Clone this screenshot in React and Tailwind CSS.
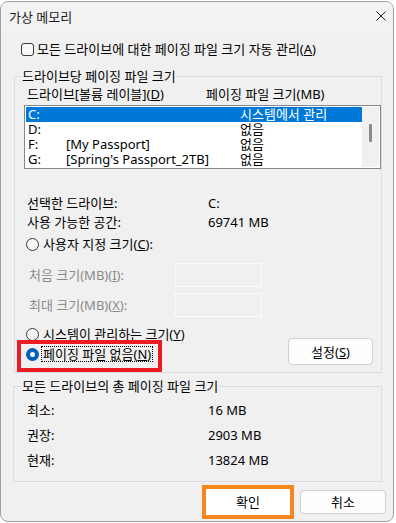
const Radio = ({ checked }) =>
  checked ? (
    <span className="w-[13px] h-[13px] rounded-full bg-[#005fb8] flex items-center justify-center shrink-0">
      <span className="w-[5px] h-[5px] rounded-full bg-white" />
    </span>
  ) : (
    <span className="w-[13px] h-[13px] rounded-full border border-[#3a3a3a] bg-[#f7f7f7] shrink-0" />
  );

export default function App() {
  const rows = [
    { d: "C:", l: "", s: "시스템에서 관리", sel: true },
    { d: "D:", l: "", s: "없음" },
    { d: "F:", l: "[My Passport]", s: "없음" },
    { d: "G:", l: "[Spring's Passport_2TB]", s: "없음" },
  ];
  return (
    <div className="w-[396px] h-[523px] bg-white pt-[1px] font-['Noto_Sans','Noto_Sans_CJK_KR',sans-serif] text-[13px] leading-[16px] text-black">
      <div className="w-[394px] h-[521px] border border-[#a0a0a0] rounded-[8px] bg-[#f0f0f0] overflow-hidden flex flex-col">
        {/* title bar */}
        <div className="h-[29px] shrink-0 flex items-center justify-between pl-[8px] pr-[7px] bg-[#f2f2f2]">
          <span className="text-[#1a1a1a]">가상 메모리</span>
          <svg width="10" height="10" viewBox="0 0 10 10" className="mb-[2px]">
            <path d="M0.5 0.5 L9.5 9.5 M9.5 0.5 L0.5 9.5" stroke="#1a1a1a" strokeWidth="1" />
          </svg>
        </div>

        {/* checkbox */}
        <div className="mt-[8px] h-[20px] flex items-center pl-[20px]">
          <span className="w-[13px] h-[13px] rounded-[3px] border border-[#3a3a3a] bg-[#f7f7f7] shrink-0" />
          <span className="ml-[3px] whitespace-nowrap">
            모든 드라이브에 대한 페이징 파일 크기 자동 관리(<u>A</u>)
          </span>
        </div>

        {/* group 1 */}
        <div className="relative mt-[17px] ml-[13px] w-[368px] h-[297px] border border-[#dcdcdc] shrink-0">
          <span className="absolute left-[6px] -top-[9px] px-[1px] bg-[#f0f0f0] whitespace-nowrap">
            드라이브당 페이징 파일 크기
          </span>

          <div className="mt-[9px] h-[16px] flex pl-[12px] whitespace-nowrap">
            <span className="w-[179px]">
              드라이브[볼륨 레이블](<u>D</u>)
            </span>
            <span>페이징 파일 크기(MB)</span>
          </div>

          <div className="mt-[3px] ml-[9px] w-[357px] h-[64px] border border-[#828790] bg-white p-[1px] flex">
            <div className="flex-1 flex flex-col">
              {rows.map((r) => (
                <div
                  key={r.d}
                  className={
                    "h-[15px] leading-[15px] flex items-center pl-[2px] whitespace-nowrap " +
                    (r.sel ? "bg-[#0078d7] text-white" : "")
                  }
                >
                  <span className="w-[38px]">{r.d}</span>
                  <span className="w-[174px]">{r.l}</span>
                  <span>{r.s}</span>
                </div>
              ))}
            </div>
            <div className="w-[17px] bg-[#f0f0f0] flex flex-col items-center">
              <span className="mt-[17px] w-[3px] h-[18px] bg-[#8a8a8a] rounded-[1px]" />
            </div>
          </div>

          <div className="mt-[24px] h-[19px] flex items-center pl-[12px]">
            <span className="w-[181px]">선택한 드라이브:</span>
            <span>C:</span>
          </div>
          <div className="h-[19px] flex items-center pl-[12px]">
            <span className="w-[181px]">사용 가능한 공간:</span>
            <span>69741 MB</span>
          </div>

          <div className="mt-[4px] h-[18px] flex items-center pl-[11px]">
            <Radio />
            <span className="ml-[4px]">
              사용자 지정 크기(<u>C</u>):
            </span>
          </div>

          <div className="mt-[10px] h-[24px] flex items-center pl-[14px] text-[#8a8a8a]">
            <span className="w-[146px]">
              처음 크기(MB)(<u>I</u>):
            </span>
            <span className="w-[87px] h-[24px] border border-[#fbfbfb] bg-[#f0f0f0]" />
          </div>
          <div className="mt-[6px] h-[24px] flex items-center pl-[14px] text-[#8a8a8a]">
            <span className="w-[146px]">
              최대 크기(MB)(<u>X</u>):
            </span>
            <span className="w-[87px] h-[24px] border border-[#fbfbfb] bg-[#f0f0f0]" />
          </div>

          <div className="mt-[8px] flex">
            <div className="flex flex-col pl-[11px]">
              <div className="h-[18px] flex items-center">
                <Radio />
                <span className="ml-[4px] whitespace-nowrap">
                  시스템이 관리하는 크기(<u>Y</u>)
                </span>
              </div>
              <div className="mt-[2px] h-[18px] flex items-center">
                <Radio checked />
                <span className="ml-[2px] px-[1px] border border-dotted border-black leading-[14px] whitespace-nowrap">
                  페이징 파일 없음(<u>N</u>)
                </span>
              </div>
            </div>
            <button className="ml-auto mr-[8px] mt-[13px] w-[85px] h-[27px] bg-[#fdfdfd] border border-[#d0d0d0] rounded-[4px] flex items-center justify-center">
              설정(<u>S</u>)
            </button>
          </div>

          <div className="absolute left-[2px] top-[263px] w-[145px] h-[32px] border-4 border-[#ec1c24]" />
        </div>

        {/* group 2 */}
        <div className="relative mt-[13px] ml-[12px] w-[369px] h-[96px] border border-[#dcdcdc] shrink-0">
          <span className="absolute left-[7px] -top-[9px] px-[1px] bg-[#f0f0f0] whitespace-nowrap">
            모든 드라이브의 총 페이징 파일 크기
          </span>
          <div className="mt-[10px]">
            {[
              ["최소:", "16 MB"],
              ["권장:", "2903 MB"],
              ["현재:", "13824 MB"],
            ].map(([a, b]) => (
              <div key={a} className="h-[25px] flex items-center pl-[13px]">
                <span className="w-[181px]">{a}</span>
                <span>{b}</span>
              </div>
            ))}
          </div>
        </div>

        {/* buttons */}
        <div className="mt-[3px] flex justify-end items-start pr-[7px]">
          <div className="w-[92px] h-[34px] border-4 border-[#f7861f] mr-[6px]">
            <button className="w-full h-full bg-white flex items-center justify-center">확인</button>
          </div>
          <button className="mt-[5px] w-[86px] h-[24px] bg-[#fdfdfd] border border-[#d0d0d0] rounded-[4px] flex items-center justify-center">
            취소
          </button>
        </div>
      </div>
    </div>
  );
}
